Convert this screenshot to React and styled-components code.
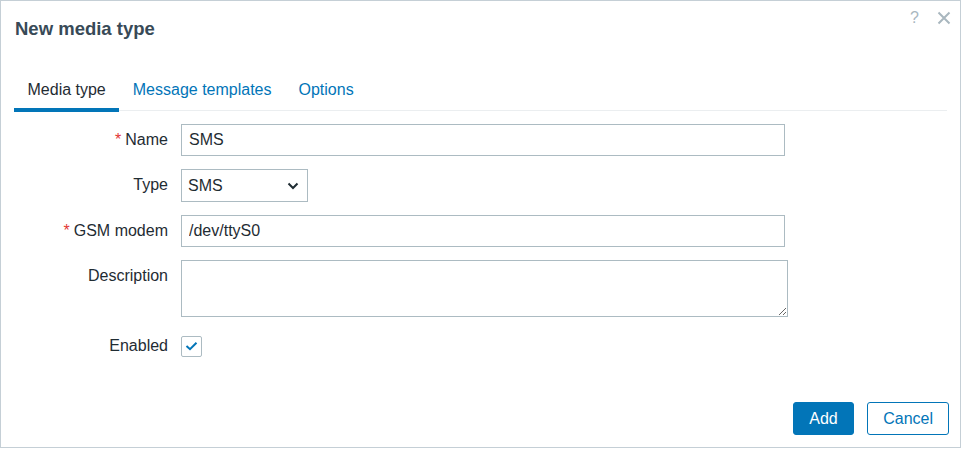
import React, { useState } from "react";
import styled, { createGlobalStyle } from "styled-components";

const GlobalStyle = createGlobalStyle`
  html, body {
    margin: 0;
    padding: 0;
    background: #ffffff;
  }
  body {
    font-family: "Liberation Sans", Arial, sans-serif;
    font-size: 16px;
    color: #1f2c33;
  }
`;

const BLUE = "#0275b8";

const Dialog = styled.div`
  box-sizing: border-box;
  width: 961px;
  height: 448px;
  border: 1px solid #c5cfd6;
  background: #fff;
  display: flex;
  flex-direction: column;
  position: relative;
`;

const Header = styled.div`
  display: flex;
  align-items: center;
  justify-content: space-between;
  height: 55px;
  padding: 0 14px;
`;

const Title = styled.h4`
  margin: 0;
  font-size: 18.5px;
  font-weight: bold;
  color: #384a57;
`;

const HeaderTools = styled.div`
  position: absolute;
  top: 7px;
  right: 8px;
  display: flex;
  align-items: center;
  gap: 17px;
`;

const HelpIcon = styled.span`
  font-size: 16px;
  color: #a9b7bf;
  line-height: 20px;
`;

const CloseButton = styled.button`
  border: none;
  background: none;
  padding: 0;
  width: 16px;
  height: 20px;
  display: flex;
  align-items: center;
  justify-content: center;
  cursor: pointer;
`;

const Body = styled.div`
  padding: 0 13px;
`;

const TabList = styled.div`
  display: flex;
  margin-top: 18px;
  border-bottom: 1px solid #ebeef0;
`;

const Tab = styled.a`
  padding: 6px 13.5px 9px;
  line-height: 19px;
  font-size: 16px;
  color: ${({ $active }) => ($active ? "#1f2c33" : BLUE)};
  border-bottom: 4px solid ${({ $active }) => ($active ? BLUE : "transparent")};
  margin-bottom: -2px;
  cursor: pointer;
  text-decoration: none;
`;

const Form = styled.div`
  display: grid;
  grid-template-columns: 154px 1fr;
  column-gap: 13px;
  row-gap: 13px;
  padding-top: 13px;
`;

const Label = styled.label`
  text-align: right;
  line-height: 32px;
  height: 32px;
  white-space: nowrap;
`;

const Star = styled.span`
  color: #e33734;
  margin-right: 4px;
`;

const Field = styled.div`
  display: flex;
  align-items: ${({ $top }) => ($top ? "flex-start" : "center")};
  min-height: 32px;
`;

const TextInput = styled.input`
  box-sizing: border-box;
  width: ${({ $w }) => $w}px;
  height: 32px;
  border: 1px solid #acbbc2;
  padding: 0 7px;
  font-family: inherit;
  font-size: 16px;
  color: #1f2c33;
  outline: none;
  background: #fff;
`;

const SelectBox = styled.div`
  box-sizing: border-box;
  width: 127px;
  height: 33px;
  border: 1px solid #acbbc2;
  display: flex;
  align-items: center;
  justify-content: space-between;
  padding: 0 8px 0 6px;
  font-size: 16px;
`;

const TextArea = styled.textarea`
  box-sizing: border-box;
  width: 607px;
  height: 57px;
  border: 1px solid #acbbc2;
  padding: 4px 7px;
  font-family: inherit;
  font-size: 16px;
  outline: none;
  resize: both;
  display: block;
`;

const CheckBox = styled.span`
  box-sizing: border-box;
  width: 21px;
  height: 21px;
  border: 1px solid #acbbc2;
  border-radius: 2px;
  display: flex;
  align-items: center;
  justify-content: center;
`;

const Footer = styled.div`
  margin-top: auto;
  display: flex;
  justify-content: flex-end;
  gap: 13px;
  padding: 0 11px 12px 0;
`;

const Button = styled.button`
  box-sizing: border-box;
  height: 33px;
  padding: 0 ${({ $pad }) => $pad}px;
  font-family: inherit;
  font-size: 16px;
  border-radius: 3px;
  border: 1px solid ${BLUE};
  background: ${({ $primary }) => ($primary ? BLUE : "#fff")};
  color: ${({ $primary }) => ($primary ? "#fff" : BLUE)};
  cursor: pointer;
`;

export default function App() {
  const [tab, setTab] = useState(0);
  const tabs = ["Media type", "Message templates", "Options"];

  return (
    <>
      <GlobalStyle />
      <Dialog>
        <Header>
          <Title>New media type</Title>
        </Header>
        <HeaderTools>
          <HelpIcon>?</HelpIcon>
          <CloseButton aria-label="Close">
            <svg width="14" height="14" viewBox="0 0 14 14">
              <path d="M1.5 1.5 L12.5 12.5 M12.5 1.5 L1.5 12.5" stroke="#a9b7bf" strokeWidth="2" />
            </svg>
          </CloseButton>
        </HeaderTools>
        <Body>
          <TabList>
            {tabs.map((t, i) => (
              <Tab key={t} $active={tab === i} onClick={() => setTab(i)}>
                {t}
              </Tab>
            ))}
          </TabList>
          <Form>
            <Label>
              <Star>*</Star>Name
            </Label>
            <Field>
              <TextInput $w={604} defaultValue="SMS" />
            </Field>

            <Label>Type</Label>
            <Field>
              <SelectBox>
                <span>SMS</span>
                <svg width="12" height="8" viewBox="0 0 12 8">
                  <path d="M1.5 1.5 L6 6 L10.5 1.5" fill="none" stroke="#1f2c33" strokeWidth="2" />
                </svg>
              </SelectBox>
            </Field>

            <Label>
              <Star>*</Star>GSM modem
            </Label>
            <Field>
              <TextInput $w={604} defaultValue="/dev/ttyS0" />
            </Field>

            <Label>Description</Label>
            <Field $top>
              <TextArea />
            </Field>

            <Label>Enabled</Label>
            <Field>
              <CheckBox>
                <svg width="13" height="10" viewBox="0 0 13 10">
                  <path d="M1.5 5 L5 8.2 L11.5 1.8" fill="none" stroke={BLUE} strokeWidth="2" />
                </svg>
              </CheckBox>
            </Field>
          </Form>
        </Body>
        <Footer>
          <Button $primary $pad={15.5}>Add</Button>
          <Button $pad={15}>Cancel</Button>
        </Footer>
      </Dialog>
    </>
  );
}
